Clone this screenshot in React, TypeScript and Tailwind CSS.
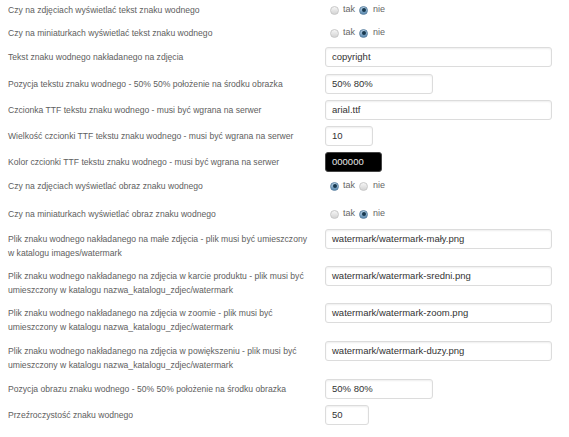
import React from 'react';

type Row =
  | { label: string; kind: 'radio'; value: 'tak' | 'nie'; h: string }
  | { label: string; kind: 'input'; value: string; width: string; h: string; dark?: boolean };

const rows: Row[] = [
  { label: 'Czy na zdjęciach wyświetlać tekst znaku wodnego', kind: 'radio', value: 'nie', h: 'h-[23px]' },
  { label: 'Czy na miniaturkach wyświetlać tekst znaku wodnego', kind: 'radio', value: 'nie', h: 'h-[24px]' },
  { label: 'Tekst znaku wodnego nakładanego na zdjęcia', kind: 'input', value: 'copyright', width: 'w-[227px]', h: 'h-[27px]' },
  { label: 'Pozycja tekstu znaku wodnego - 50% 50% położenie na środku obrazka', kind: 'input', value: '50% 80%', width: 'w-[108px]', h: 'h-[26px]' },
  { label: 'Czcionka TTF tekstu znaku wodnego - musi być wgrana na serwer', kind: 'input', value: 'arial.ttf', width: 'w-[227px]', h: 'h-[26px]' },
  { label: 'Wielkość czcionki TTF tekstu znaku wodnego - musi być wgrana na serwer', kind: 'input', value: '10', width: 'w-[48px]', h: 'h-[26px]' },
  { label: 'Kolor czcionki TTF tekstu znaku wodnego - musi być wgrana na serwer', kind: 'input', value: '000000', width: 'w-[57px]', h: 'h-[24px]', dark: true },
  { label: 'Czy na zdjęciach wyświetlać obraz znaku wodnego', kind: 'radio', value: 'tak', h: 'h-[28px]' },
  { label: 'Czy na miniaturkach wyświetlać obraz znaku wodnego', kind: 'radio', value: 'nie', h: 'h-[25px]' },
  { label: 'Plik znaku wodnego nakładanego na małe zdjęcia - plik musi być umieszczony w katalogu images/watermark', kind: 'input', value: 'watermark/watermark-mały.png', width: 'w-[227px]', h: 'h-[37px]' },
  { label: 'Plik znaku wodnego nakładanego na zdjęcia w karcie produktu - plik musi być umieszczony w katalogu nazwa_katalogu_zdjec/watermark', kind: 'input', value: 'watermark/watermark-sredni.png', width: 'w-[227px]', h: 'h-[37px]' },
  { label: 'Plik znaku wodnego nakładanego na zdjęcia w zoomie - plik musi być umieszczony w katalogu nazwa_katalogu_zdjec/watermark', kind: 'input', value: 'watermark/watermark-zoom.png', width: 'w-[227px]', h: 'h-[38px]' },
  { label: 'Plik znaku wodnego nakładanego na zdjęcia w powiększeniu - plik musi być umieszczony w katalogu nazwa_katalogu_zdjec/watermark', kind: 'input', value: 'watermark/watermark-duzy.png', width: 'w-[227px]', h: 'h-[38px]' },
  { label: 'Pozycja obrazu znaku wodnego - 50% 50% położenie na środku obrazka', kind: 'input', value: '50% 80%', width: 'w-[108px]', h: 'h-[26px]' },
  { label: 'Przeźroczystość znaku wodnego', kind: 'input', value: '50', width: 'w-[44px]', h: 'h-[26px]' },
];

function Radio({ checked }: { checked: boolean }) {
  return checked ? (
    <span className="inline-flex h-[9px] w-[9px] items-center justify-center rounded-full border border-[#5d83a3] bg-gradient-to-b from-[#b5cfe4] to-[#5c8bb1]">
      <span className="h-[4px] w-[4px] rounded-full bg-[#17384f]" />
    </span>
  ) : (
    <span className="inline-block h-[9px] w-[9px] rounded-full border border-[#c8c8c8] bg-gradient-to-b from-[#f6f6f6] to-[#d4d4d4]" />
  );
}

export default function App() {
  return (
    <div className="min-h-[437px] bg-white pl-2 font-['Liberation_Sans',Arial,sans-serif] text-[8.6px] text-[#606060]">
      {rows.map((r, i) => (
        <div key={i} className={`flex items-start ${r.h}`}>
          <div className="w-[300px] shrink-0 pt-[2.5px] leading-[14.5px]">{r.label}</div>
          {r.kind === 'radio' ? (
            <div className="ml-[17px] flex h-[20px] items-center pl-[5px] text-[9px] text-[#666]">
              <Radio checked={r.value === 'tak'} />
              <span className="ml-[4px] mr-[4px]">tak</span>
              <Radio checked={r.value === 'nie'} />
              <span className="ml-[5px]">nie</span>
            </div>
          ) : (
            <div
              className={`ml-[17px] flex h-[20px] items-center rounded-[3px] border px-[6px] text-[9.5px] shadow-[inset_0_1px_2px_rgba(0,0,0,0.07)] ${r.width} ${
                r.dark ? 'border-[#444] bg-black text-[#e8e8e8]' : 'border-[#dcdcdc] bg-white text-[#333]'
              }`}
            >
              {r.value}
            </div>
          )}
        </div>
      ))}
    </div>
  );
}
